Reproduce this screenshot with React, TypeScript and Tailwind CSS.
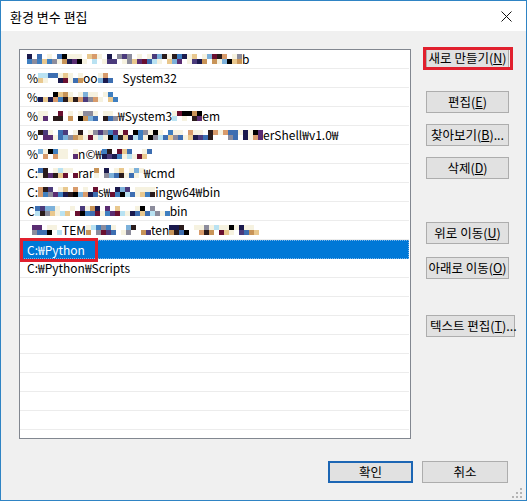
import React from "react";

const FONT = '"Noto Sans CJK KR", "Noto Sans", sans-serif';

function rng(seed: number) {
  let a = seed >>> 0;
  return () => {
    a = (a + 0x6d2b79f5) >>> 0;
    let t = a;
    t = Math.imul(t ^ (t >>> 15), t | 1);
    t ^= t + Math.imul(t ^ (t >>> 7), t | 61);
    return ((t ^ (t >>> 14)) >>> 0) / 4294967296;
  };
}

const PALETTE = [
  "#1b1a4d",
  "#5a2d72",
  "#6a1030",
  "#c89458",
  "#e9c88e",
  "#7db1da",
  "#3d6eb1",
  "#b9e2f2",
  "#8c8c9c",
  "#2a1b1b",
  "#d89b6b",
  "#4b3b7c",
  "#000000",
  "#3f7fc0",
];

function Mosaic({ w, seed }: { w: number; seed: number }) {
  const cols = Math.max(1, Math.round(w / 5));
  const r = rng(seed);
  const cells: React.ReactNode[] = [];
  for (let row = 0; row < 2; row++) {
    for (let c = 0; c < cols; c++) {
      const v = r();
      const white = row === 0 ? v < 0.55 : v < 0.3;
      const color = white
        ? r() < 0.5
          ? "#ffffff"
          : "#f6f2e0"
        : PALETTE[Math.floor(r() * PALETTE.length)];
      cells.push(
        <span
          key={row * 1000 + c}
          className="block h-[5px] w-[5px]"
          style={{ backgroundColor: color }}
        />
      );
    }
  }
  return (
    <span
      className="inline-flex flex-wrap self-center"
      style={{ width: cols * 5, height: 10 }}
    >
      {cells}
    </span>
  );
}

type Seg = { t?: string; m?: number };

const ROWS: Seg[][] = [
  [{ m: 214 }, { t: "b" }],
  [{ t: "%" }, { m: 46 }, { t: "oo" }, { m: 26 }, { t: "System32" }],
  [{ t: "%" }, { m: 78 }],
  [{ t: "%" }, { m: 80 }, { t: "₩System3" }, { m: 32 }, { t: "em" }],
  [{ t: "%" }, { m: 224 }, { t: "erShell₩v1.0₩" }],
  [{ t: "%" }, { m: 40 }, { t: "n©₩" }, { m: 50 }],
  [{ t: "C:" }, { m: 38 }, { t: "rar" }, { m: 48 }, { t: "₩cmd" }],
  [{ t: "C:" }, { m: 60 }, { t: "s₩" }, { m: 46 }, { t: "ingw64₩bin" }],
  [{ t: "C" }, { m: 134 }, { t: "bin" }],
  [{ m: 34 }, { t: "TEM" }, { m: 64 }, { t: "ten" }, { m: 90 }],
];

function Btn({
  label,
  acc,
  suffix,
  className,
}: {
  label: string;
  acc: string;
  suffix?: string;
  className?: string;
}) {
  return (
    <div
      className={
        "flex h-[22px] items-center justify-center whitespace-nowrap border border-[#adadad] bg-[#e1e1e1] text-[12.5px] leading-none text-black " +
        (className ?? "")
      }
    >
      {label}(<span className="underline">{acc}</span>){suffix}
    </div>
  );
}

export default function App() {
  const emptyRows = Array.from({ length: 10 });
  return (
    <div
      className="relative flex h-[501px] w-[527px] flex-col overflow-hidden border border-[#2f84c4] bg-[#f0f0f0]"
      style={{ fontFamily: FONT }}
    >
      {/* Title bar */}
      <div className="flex h-[30px] shrink-0 items-center justify-between bg-white pl-[9px] pr-[14px]">
        <span className="text-[13px] leading-none text-black">환경 변수 편집</span>
        <svg width="11" height="11" viewBox="0 0 11 11" className="mt-px">
          <path d="M0.5 0.5 L10.5 10.5 M10.5 0.5 L0.5 10.5" stroke="#111" strokeWidth="1" fill="none" />
        </svg>
      </div>

      {/* Body */}
      <div className="flex flex-1 flex-col pl-[18px] pr-[17px] pt-[18px]">
        <div className="flex">
          {/* List */}
          <div className="h-[390px] w-[392px] shrink-0 overflow-hidden border border-[#828790] bg-white pr-px text-[12px] text-black">
            {ROWS.map((segs, i) => (
              <div
                key={i}
                className="flex h-[19px] items-center whitespace-nowrap border-b border-[#ececec] pl-[7px] leading-none"
              >
                {segs.map((s, j) =>
                  s.t !== undefined ? (
                    <span key={j}>{s.t}</span>
                  ) : (
                    <Mosaic key={j} w={s.m!} seed={i * 31 + j * 7 + 3} />
                  )
                )}
              </div>
            ))}
            <div className="flex h-[19px] items-center border border-dotted border-[#7fb6e8] bg-[#0078d7] pl-[6px] leading-none text-white">
              C:₩Python
            </div>
            <div className="flex h-[19px] items-center border-b border-[#ececec] pl-[7px] leading-none">
              C:₩Python₩Scripts
            </div>
            {emptyRows.map((_, i) => (
              <div key={i} className="h-[19px] border-b border-[#ececec]" />
            ))}
          </div>

          {/* Buttons */}
          <div className="ml-[15px] flex w-[83px] flex-col">
            <Btn label="새로 만들기" acc="N" className="-mt-[2px]" />
            <Btn label="편집" acc="E" className="mt-[22px]" />
            <Btn label="찾아보기" acc="B" suffix="..." className="mt-[11px]" />
            <Btn label="삭제" acc="D" className="mt-[11px]" />
            <Btn label="위로 이동" acc="U" className="mt-[43px]" />
            <Btn label="아래로 이동" acc="O" className="mt-[13px]" />
            <Btn label="텍스트 편집" acc="T" suffix="..." className="mt-[36px] w-[89px] justify-start pl-[3px]" />
          </div>
        </div>

        {/* Bottom buttons */}
        <div className="mt-[22px] flex justify-end gap-[9px] pr-px">
          <div className="flex h-[22px] w-[85px] items-center justify-center border-2 border-[#1c66b4] bg-[#e1e1e1] text-[12.5px] leading-none text-black">
            확인
          </div>
          <div className="flex h-[22px] w-[86px] items-center justify-center border border-[#adadad] bg-[#e1e1e1] text-[12.5px] leading-none text-black">
            취소
          </div>
        </div>
      </div>

      {/* Resize grip */}
      <svg width="10" height="10" viewBox="0 0 10 10" className="absolute bottom-[2px] right-[4px]">
        <rect x="8" y="0" width="2" height="2" fill="#b4b4b4" />
        <rect x="4" y="4" width="2" height="2" fill="#b4b4b4" />
        <rect x="8" y="4" width="2" height="2" fill="#b4b4b4" />
        <rect x="0" y="8" width="2" height="2" fill="#b4b4b4" />
        <rect x="4" y="8" width="2" height="2" fill="#b4b4b4" />
        <rect x="8" y="8" width="2" height="2" fill="#b4b4b4" />
      </svg>

      {/* Red annotation boxes */}
      <div className="pointer-events-none absolute left-[422px] top-[46px] h-[23px] w-[90px] border-[3px] border-[#e1202e]" />
      <div className="pointer-events-none absolute left-[19px] top-[237px] h-[24px] w-[78px] border-[3px] border-[#e1202e]" />
    </div>
  );
}
